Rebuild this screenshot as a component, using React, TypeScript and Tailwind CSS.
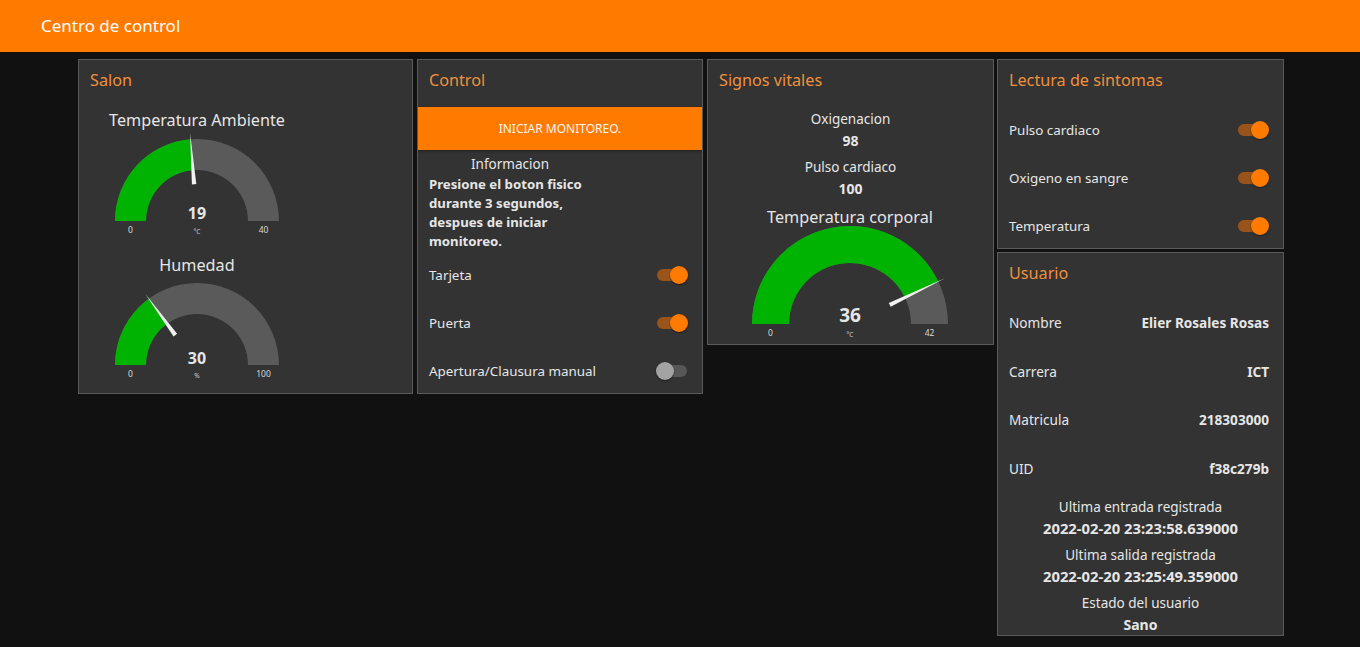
import React from "react";

type GaugeProps = {
  w: number;
  h: number;
  cx: number;
  cy: number;
  ro: number;
  ri: number;
  value: number;
  min: number;
  max: number;
  title: string;
  titleY: number;
  titleSize: number;
  unit: string;
  valueSize: number;
  valueY: number;
};

function Gauge(p: GaugeProps) {
  const { cx, cy, ro, ri } = p;
  const t = Math.PI * ((p.value - p.min) / (p.max - p.min));
  const pt = (r: number, a: number) => [cx - r * Math.cos(a), cy - r * Math.sin(a)];
  const [ox, oy] = pt(ro, t);
  const [ix, iy] = pt(ri, t);
  const bg = `M ${cx - ro} ${cy} A ${ro} ${ro} 0 0 1 ${cx + ro} ${cy} L ${cx + ri} ${cy} A ${ri} ${ri} 0 0 0 ${cx - ri} ${cy} Z`;
  const fg = `M ${cx - ro} ${cy} A ${ro} ${ro} 0 0 1 ${ox} ${oy} L ${ix} ${iy} A ${ri} ${ri} 0 0 0 ${cx - ri} ${cy} Z`;
  const [bx, by] = pt(ro * 0.45, t);
  const [tx, ty] = pt(ro * 1.075, t);
  const nx = Math.sin(t);
  const ny = -Math.cos(t);
  const hw = 2.2;
  const needle = `${bx + nx * hw},${by + ny * hw} ${bx - nx * hw},${by - ny * hw} ${tx},${ty}`;
  const mid = (ro + ri) / 2;
  return (
    <svg width={p.w} height={p.h} className="block">
      <text x={cx} y={p.titleY} textAnchor="middle" dominantBaseline="central" fill="#e6e6e6" fontSize={p.titleSize}>
        {p.title}
      </text>
      <path d={bg} fill="#5a5a5a" />
      <path d={fg} fill="#00b300" />
      <polygon points={needle} fill="#f2f2f2" />
      <text x={cx} y={p.valueY} textAnchor="middle" fill="#e6e6e6" fontSize={p.valueSize} fontWeight="bold">
        {p.value}
      </text>
      <text x={cx} y={cy + 10} textAnchor="middle" dominantBaseline="central" fill="#cfcfcf" fontSize={6.5}>
        {p.unit}
      </text>
      <text x={cx - mid} y={cy + 8.5} textAnchor="middle" dominantBaseline="central" fill="#d8d8d8" fontSize={8.5}>
        {p.min}
      </text>
      <text x={cx + mid} y={cy + 8.5} textAnchor="middle" dominantBaseline="central" fill="#d8d8d8" fontSize={8.5}>
        {p.max}
      </text>
    </svg>
  );
}

function Toggle({ on }: { on: boolean }) {
  return (
    <div className="relative w-[32px] h-[18px] shrink-0">
      <div
        className={
          on
            ? "absolute left-[1px] right-[1px] top-[3px] h-[12px] rounded-full bg-[#9a5419]"
            : "absolute left-[1px] right-[1px] top-[3px] h-[12px] rounded-full bg-[#575757]"
        }
      />
      <div
        className={
          on
            ? "absolute right-0 top-0 w-[18px] h-[18px] rounded-full bg-[#ff7b00] shadow-[0_1px_2px_rgba(0,0,0,0.4)]"
            : "absolute left-0 top-0 w-[18px] h-[18px] rounded-full bg-[#a3a3a3] shadow-[0_1px_2px_rgba(0,0,0,0.4)]"
        }
      />
    </div>
  );
}

function Title({ children }: { children: React.ReactNode }) {
  return <div className="h-[40px] flex items-center pl-[11px] text-[16.2px] text-[#f0903c]">{children}</div>;
}

function ToggleRow({ label, on }: { label: string; on: boolean }) {
  return (
    <div className="h-[48px] flex items-center justify-between pl-[11px] pr-[14px] text-[13.4px] text-[#e6e6e6]">
      <span>{label}</span>
      <Toggle on={on} />
    </div>
  );
}

function InfoRow({ label, value, h }: { label: string; value: string; h: string }) {
  return (
    <div className={`${h} flex items-center justify-between pl-[11px] pr-[14px] text-[13.6px] text-[#e6e6e6]`}>
      <span>{label}</span>
      <span className="font-bold">{value}</span>
    </div>
  );
}

function Pair({ label, value, vs }: { label: string; value: string; vs?: string }) {
  return (
    <div className="h-[48px] flex flex-col items-center text-[13.5px] text-[#e6e6e6]">
      <div className="mt-[3px] h-[20px] flex items-center">{label}</div>
      <div className={`h-[22px] flex items-center font-bold ${vs ?? ""}`}>{value}</div>
    </div>
  );
}

const panel = "bg-[#333333] border border-[#5a5a5a] overflow-hidden";

export default function App() {
  return (
    <div className="min-h-[647px] bg-[#111111] font-['Noto_Sans',sans-serif]">
      <div className="h-[52px] bg-[#ff7b00] flex items-center pl-[41px] pb-[1px] text-[17px] text-white">Centro de control</div>
      <div className="flex items-start pt-[7px] pl-[78px]">
        {/* Salon */}
        <div className={`${panel} w-[335px] h-[335px]`}>
          <Title>Salon</Title>
          <Gauge w={333} h={145} cx={118} cy={121} ro={82} ri={51} value={19} min={0} max={40} title="Temperatura Ambiente" titleY={20} titleSize={16.2} unit="°C" valueSize={16} valueY={119} />
          <Gauge w={333} h={145} cx={118} cy={120} ro={82} ri={51} value={30} min={0} max={100} title="Humedad" titleY={20} titleSize={16.2} unit="%" valueSize={16} valueY={119} />
        </div>

        {/* Control */}
        <div className={`${panel} w-[286px] h-[335px] ml-[4px]`}>
          <Title>Control</Title>
          <div className="mt-[7px] h-[43px] bg-[#ff7b00] flex items-center justify-center text-[12px] text-[#f5f5f5] shadow-[0_1px_3px_rgba(0,0,0,0.4)]">
            INICIAR MONITOREO.
          </div>
          <div className="w-[162px] ml-[11px]">
            <div className="h-[25px] pt-[3px] flex items-center justify-center text-[13.5px] text-[#e6e6e6]">Informacion</div>
            <div className="text-[13.2px] leading-[19px] font-bold text-[#e6e6e6]">
              Presione el boton fisico
              <br />
              durante 3 segundos,
              <br />
              despues de iniciar
              <br />
              monitoreo.
            </div>
          </div>
          <ToggleRow label="Tarjeta" on={true} />
          <ToggleRow label="Puerta" on={true} />
          <ToggleRow label="Apertura/Clausura manual" on={false} />
        </div>

        {/* Signos vitales */}
        <div className={`${panel} w-[287px] h-[286px] ml-[4px]`}>
          <Title>Signos vitales</Title>
          <div className="mt-[6px]">
            <Pair label="Oxigenacion" value="98" vs="text-[14px]" />
            <Pair label="Pulso cardiaco" value="100" vs="text-[14px]" />
          </div>
          <Gauge w={285} h={142} cx={142} cy={122} ro={98} ri={61} value={36} min={0} max={42} title="Temperatura corporal" titleY={15} titleSize={16.2} unit="°C" valueSize={19} valueY={120} />
        </div>

        {/* Right column */}
        <div className="flex flex-col ml-[3px] gap-[3px]">
          <div className={`${panel} w-[287px] h-[190px]`}>
            <Title>Lectura de sintomas</Title>
            <div className="mt-[6px]">
              <ToggleRow label="Pulso cardiaco" on={true} />
              <ToggleRow label="Oxigeno en sangre" on={true} />
              <ToggleRow label="Temperatura" on={true} />
            </div>
          </div>
          <div className={`${panel} w-[287px] h-[384px]`}>
            <Title>Usuario</Title>
            <div className="mt-[6px]">
              <InfoRow label="Nombre" value="Elier Rosales Rosas" h="h-[49px]" />
              <InfoRow label="Carrera" value="ICT" h="h-[48px]" />
              <InfoRow label="Matricula" value="218303000" h="h-[49px]" />
              <InfoRow label="UID" value="f38c279b" h="h-[49px]" />
              <Pair label="Ultima entrada registrada" value="2022-02-20 23:23:58.639000" vs="text-[14.8px]" />
              <Pair label="Ultima salida registrada" value="2022-02-20 23:25:49.359000" vs="text-[14.8px]" />
              <Pair label="Estado del usuario" value="Sano" vs="text-[14px]" />
            </div>
          </div>
        </div>
      </div>
    </div>
  );
}
